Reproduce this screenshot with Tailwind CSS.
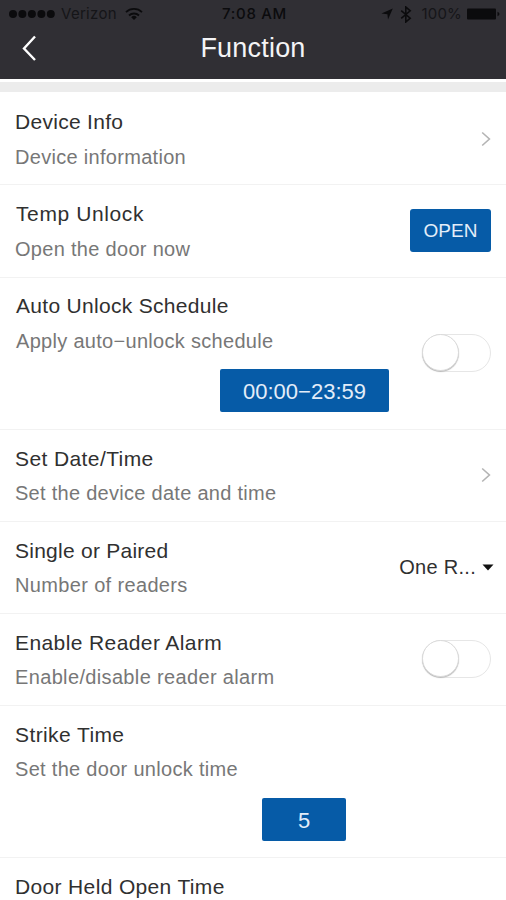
<!DOCTYPE html>
<html lang="en">
<head>
    <meta charset="UTF-8">
    <meta name="viewport" content="width=device-width, initial-scale=1.0">
    <title>Function</title>
    <script src="https://cdn.jsdelivr.net/npm/@tailwindcss/browser@4"></script>
</head>
<body class="bg-white font-['Liberation_Sans',Arial,sans-serif] h-[900px] overflow-hidden text-[#303030]">

    <header class="h-[79px] bg-[#302f34] flex flex-col">
        <!-- Status bar -->
        <div class="grid grid-cols-3 items-center h-7 pl-[9px] pr-[6px] font-['Inter',sans-serif] text-[15px] leading-7 text-[#0b0b0d]">
            <div class="flex items-center">
                <svg class="w-[46px] h-2.5" viewBox="0 0 46 10" fill="currentColor">
                    <circle cx="4" cy="5" r="4"/><circle cx="13.4" cy="5" r="4"/><circle cx="22.9" cy="5" r="4"/><circle cx="32.4" cy="5" r="4"/><circle cx="41.8" cy="5" r="4"/>
                </svg>
                <span class="ml-[6px] w-[57px] tracking-[0.3px] text-[#151518]">Verizon</span>
                <svg class="ml-[7px] w-[18px] h-[14px]" viewBox="0 0 18 14" fill="none" stroke="currentColor" stroke-width="1.8">
                    <path d="M1 5.2a11.5 11.5 0 0 1 16 0M4 8.5a7.3 7.3 0 0 1 10 0"/>
                    <path d="M9 13 6.2 10.2a4 4 0 0 1 5.6 0z" fill="currentColor" stroke="none"/>
                </svg>
            </div>
            <span class="text-center font-medium tracking-[0.7px] whitespace-nowrap">7:08 AM</span>
            <div class="flex items-center justify-end">
                <svg class="w-[12px] h-[12px]" viewBox="0 0 12 12" fill="currentColor"><path d="M11.8.6 7 11.6 6.4 6.2.4 5.4z"/></svg>
                <svg class="ml-[7px] w-[12px] h-[17px]" viewBox="0 0 12 17" fill="none" stroke="currentColor" stroke-width="1.6"><path d="M1.2 4.6l9 7.6L5.8 16V1l4.4 3.8-9 7.6"/></svg>
                <span class="ml-[9px] tracking-[0.2px] text-[#151518]">100%</span>
                <svg class="ml-[5px] w-[33px] h-[12px]" viewBox="0 0 33 12" fill="currentColor"><rect x="0" y="0.5" width="29" height="11" rx="1"/><path d="M30.5 3.8q2 .8 2 2.2t-2 2.2z"/></svg>
            </div>
        </div>
        <!-- Title bar -->
        <div class="grid grid-cols-[100px_1fr_100px] h-[40px] items-center text-white">
            <svg class="ml-[22px] w-[15px] h-[27px]" viewBox="0 0 15 27" fill="none" stroke="currentColor" stroke-width="2.4"><path d="M13 1.5 2 13.5 13 25"/></svg>
            <h1 class="text-center text-[27px] leading-[40px] tracking-[0.2px] text-[#f4f4f6]">Function</h1>
        </div>
    </header>

    <div class="mt-[3px] h-[10px] bg-[#ececec]"></div>

    <main>
        <section class="flex justify-between h-[92px] mt-px px-[15px] pt-4 border-b border-[#f2f2f2]">
            <div>
                <h2 class="text-[21px] leading-[26px] tracking-[0.3px]">Device Info</h2>
                <p class="mt-[9px] text-[20px] leading-[26px] tracking-[0.3px] text-[#777]">Device information</p>
            </div>
            <svg class="mt-[22px] w-[10px] h-4" viewBox="0 0 10 16" fill="none" stroke="#b4b4b4" stroke-width="1.6"><path d="M1.2 1.5 8.4 8 1.2 14.5"/></svg>
        </section>

        <section class="flex justify-between h-[93px] px-[15px] pt-4 border-b border-[#f2f2f2]">
            <div>
                <h2 class="pl-px text-[21px] leading-[26px] tracking-[0.6px]">Temp Unlock</h2>
                <p class="mt-[9px] text-[20px] leading-[26px] tracking-[0.3px] text-[#777]">Open the door now</p>
            </div>
            <button class="mt-2 w-[81px] h-[43px] pt-[2px] rounded-[3px] bg-[#065ba7] text-[19px] tracking-[0.1px] text-[#e3edf9]">OPEN</button>
        </section>

        <section class="flex justify-between h-[152px] px-[15px] pt-[15px] border-b border-[#f2f2f2]">
            <div>
                <h2 class="pl-px text-[21px] leading-[26px] tracking-[0.3px]">Auto Unlock Schedule</h2>
                <p class="mt-[9px] pl-px text-[20px] leading-[26px] tracking-[0.3px] text-[#777]">Apply auto−unlock schedule</p>
                <button class="mt-[15px] ml-[205px] w-[169px] h-[43px] pt-px rounded-[2px] bg-[#065ba7] text-[22px] text-[#e3edf9]">00:00−23:59</button>
            </div>
            <div class="mt-[41px] w-[69px] h-[38px] rounded-full border-[1.5px] border-[#e6e6e6]">
                <div class="-mt-px -ml-px size-[37px] rounded-full bg-white border border-[#dadada] shadow-[0_1px_1px_#bbb]"></div>
            </div>
        </section>

        <section class="flex justify-between h-[92px] px-[15px] pt-4 border-b border-[#f2f2f2]">
            <div>
                <h2 class="text-[21px] leading-[26px] tracking-[0.4px]">Set Date/Time</h2>
                <p class="mt-[8px] text-[20px] leading-[26px] tracking-[0.28px] text-[#777]">Set the device date and time</p>
            </div>
            <svg class="mt-[21px] w-[10px] h-4" viewBox="0 0 10 16" fill="none" stroke="#b4b4b4" stroke-width="1.6"><path d="M1.2 1.5 8.4 8 1.2 14.5"/></svg>
        </section>

        <section class="flex justify-between h-[92px] pl-[15px] pr-[12px] pt-4 border-b border-[#f2f2f2]">
            <div>
                <h2 class="text-[21px] leading-[26px] tracking-[0.25px]">Single or Paired</h2>
                <p class="mt-[8px] text-[20px] leading-[26px] tracking-[0.35px] text-[#777]">Number of readers</p>
            </div>
            <div class="flex items-center h-[26px] mt-[16px]">
                <span class="text-[20px] tracking-[0.3px]">One R...</span>
                <svg class="ml-[6px] w-[12px] h-[7px]" viewBox="0 0 12 7" fill="#111"><path d="M.5.5h11L6 6.5z"/></svg>
            </div>
        </section>

        <section class="flex justify-between h-[92px] px-[15px] pt-4 border-b border-[#f2f2f2]">
            <div>
                <h2 class="text-[21px] leading-[26px] tracking-[0.4px]">Enable Reader Alarm</h2>
                <p class="mt-[8px] text-[20px] leading-[26px] tracking-[0.35px] text-[#777]">Enable/disable reader alarm</p>
            </div>
            <div class="mt-[10px] w-[69px] h-[38px] rounded-full border-[1.5px] border-[#e6e6e6]">
                <div class="-mt-px -ml-px size-[37px] rounded-full bg-white border border-[#dadada] shadow-[0_1px_1px_#bbb]"></div>
            </div>
        </section>

        <section class="h-[152px] px-[15px] pt-4 border-b border-[#f2f2f2]">
            <h2 class="text-[21px] leading-[26px] tracking-[0.4px]">Strike Time</h2>
            <p class="mt-[8px] text-[20px] leading-[26px] tracking-[0.3px] text-[#777]">Set the door unlock time</p>
            <button class="mt-[16px] ml-[247px] w-[84px] h-[43px] pt-px rounded-[2px] bg-[#065ba7] text-[22px] text-[#e3edf9]">5</button>
        </section>

        <section class="px-[15px] pt-4">
            <h2 class="text-[21px] leading-[26px] tracking-[0.35px]">Door Held Open Time</h2>
        </section>
    </main>

</body>
</html>
